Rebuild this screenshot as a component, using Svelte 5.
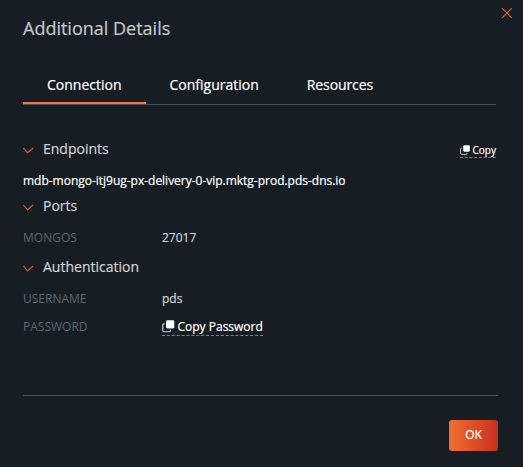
<script>
  const tabs = ['Connection', 'Configuration', 'Resources'];
  let active = $state('Connection');
</script>

{#snippet copyIcon()}
  <svg class="copy-icon" viewBox="0 0 13 13" aria-hidden="true">
    <rect x="4.2" y="0.2" width="8.6" height="8.6" rx="1.5" fill="#fff" />
    <path d="M2.8 4.1H2A1.2 1.2 0 0 0 .8 5.3V11A1.2 1.2 0 0 0 2 12.2H7.7A1.2 1.2 0 0 0 8.9 11V10.2" fill="none" stroke="#d5d8da" stroke-width="1.2" />
  </svg>
{/snippet}

{#snippet heading(title)}
  <h2>
    <svg width="11" height="7" viewBox="0 0 11 7" aria-hidden="true">
      <path d="M.4 1L4.6 5.7L10.2 1" fill="none" stroke="#d95f30" stroke-width="1.1" />
    </svg>
    <span>{title}</span>
  </h2>
{/snippet}

<div class="dialog">
  <header>
    <h1><span>Additional Details</span></h1>
    <button class="close" aria-label="Close">
      <svg width="10" height="10" viewBox="0 0 10 10">
        <path d="M.3 .3L9.7 9.7M9.7 .3L.3 9.7" stroke="#f0652c" stroke-width="1.1" />
      </svg>
    </button>
  </header>

  <nav>
    {#each tabs as tab}
      <button class="tab" class:active={active === tab} onclick={() => (active = tab)}>{tab}</button>
    {/each}
  </nav>

  <main>
    <div class="section-row">
      {@render heading('Endpoints')}
      <button class="copy small">{@render copyIcon()}<span>Copy</span></button>
    </div>
    <p class="endpoint"><span>mdb-mongo-itj9ug-px-delivery-0-vip.mktg-prod.pds-dns.io</span></p>
    {@render heading('Ports')}
    <div class="field ports"><span class="label">MONGOS</span><span>27017</span></div>
    {@render heading('Authentication')}
    <div class="field"><span class="label">USERNAME</span><span>pds</span></div>
    <div class="field">
      <span class="label">PASSWORD</span>
      <button class="copy">{@render copyIcon()}<span>Copy Password</span></button>
    </div>
  </main>

  <footer><button class="ok">OK</button></footer>
</div>

<style>
  :global(body) {
    margin: 0;
    background: #161d23;
  }
  .dialog {
    box-sizing: border-box;
    width: 523px;
    height: 467px;
    padding: 0 25px 0 23px;
    display: flex;
    flex-direction: column;
    overflow: hidden;
    background: #161d23;
    border-bottom: 1px solid #101a24;
    color: #d0d2d3;
    font-family: 'Open Sans', 'Noto Sans', sans-serif;
    font-size: 12px;
    -webkit-text-stroke: 0.2px currentColor;
  }
  button {
    margin: 0;
    padding: 0;
    border: 0;
    background: none;
    color: #fff;
    font: inherit;
  }
  header {
    height: 66px;
    display: flex;
    justify-content: space-between;
    align-items: flex-start;
  }
  h1 {
    margin: 16px 0 0;
    font-size: 18px;
    line-height: 25px;
    font-weight: 400;
    color: #c5c8ca;
  }
  .close {
    margin: 8px -14px 0 0;
    height: 10px;
    display: flex;
  }
  nav {
    display: flex;
    height: 38px;
    margin-right: 2px;
    border-bottom: 1px solid #46525a;
  }
  .tab {
    box-sizing: border-box;
    height: 38px;
    padding: 1px 24px 0;
    border-bottom: 2px solid transparent;
    font-size: 14px;
    line-height: 36px;
  }
  .tab:last-child {
    letter-spacing: -0.1px;
  }
  .tab.active {
    border-color: #fb7140;
  }
  main {
    height: 290px;
    padding-top: 34px;
    box-sizing: border-box;
  }
  .section-row {
    display: flex;
    justify-content: space-between;
  }
  h2 {
    display: flex;
    align-items: center;
    gap: 9px;
    margin: 0;
    height: 20px;
    font-size: 14px;
    font-weight: 400;
    line-height: 20px;
  }
  h2 svg {
    margin-top: 3px;
  }
  .endpoint {
    margin: 12px 0 6px;
    height: 19px;
    line-height: 19px;
    color: #fff;
    letter-spacing: -0.015px;
  }
  .field {
    display: flex;
    height: 28px;
    line-height: 28px;
  }
  .ports {
    margin: 8px 0 5px;
  }
  h2 + .field:not(.ports) {
    margin-top: 8px;
  }
  .label {
    width: 139px;
    color: #586a73;
    -webkit-text-stroke-width: 0;
  }
  .copy {
    display: flex;
    align-items: center;
    align-self: flex-start;
    gap: 3px;
    height: 18px;
    margin-top: 5px;
    line-height: 18px;
    border-bottom: 1px dashed #78858c;
  }
  .copy-icon {
    width: 12.5px;
    height: 12.5px;
  }
  .small {
    margin: 5px 2px 0 0;
    height: 14px;
    padding-bottom: 1px;
    font-size: 10px;
    line-height: 13px;
  }
  .small .copy-icon {
    width: 10px;
    height: 10px;
  }
  footer {
    display: flex;
    justify-content: flex-end;
    padding-top: 24px;
    border-top: 1px solid #465057;
  }
  .ok {
    width: 49px;
    height: 31px;
    border-radius: 3px;
    background: linear-gradient(90deg, #f07030, #c9301c);
    line-height: 29px;
    padding-bottom: 2px;
  }
</style>
